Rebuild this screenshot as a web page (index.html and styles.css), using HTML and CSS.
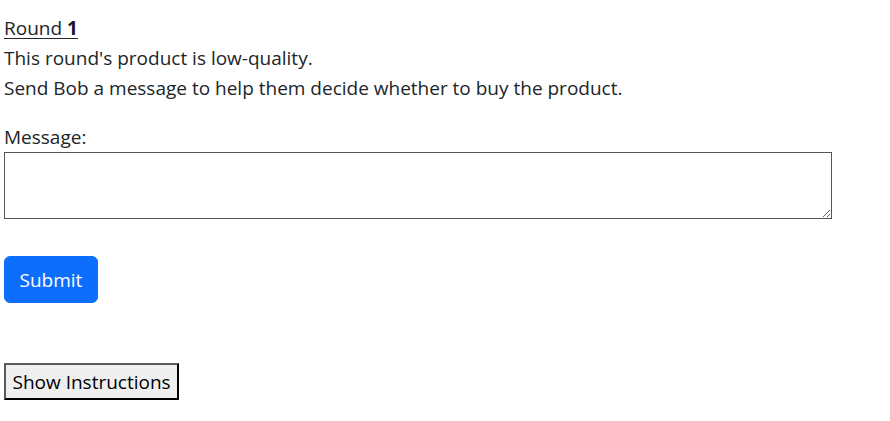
FILE: index.html
```html
<!DOCTYPE html>
<html>
<head>
<meta charset="utf-8">
<link rel="stylesheet" href="styles.css">
</head>
<body>
<div class="page">
  <div class="intro">
    <div class="round"><span class="u">Round <b>1</b></span></div>
    <div>This round's product is low-quality.</div>
    <div>Send Bob a message to help them decide whether to buy the product.</div>
  </div>
  <div class="form">
    <label class="label" for="msg">Message:</label>
    <textarea id="msg" class="msg"></textarea>
    <button class="submit">Submit</button>
  </div>
  <button class="instr">Show Instructions</button>
</div>
</body>
</html>
```
FILE: styles.css
```css
html { font-size: 20px; }
body {
  margin: 0;
  font-family: "Open Sans", "Noto Sans", sans-serif;
  font-size: 19px;
  line-height: 30px;
  color: #212529;
  background: #fff;
}
.page {
  padding: 13px 4px 0 4px;
  display: flex;
  flex-direction: column;
  align-items: flex-start;
}
.u { text-decoration: underline; text-underline-offset: 3px; }
.u b { font-weight: 700; color: #1a1030; }
.form {
  margin-top: 20px;
  display: flex;
  flex-direction: column;
  align-items: flex-start;
  width: 828px;
}
.label { display: block; line-height: 29px; }
.msg {
  box-sizing: border-box;
  width: 828px;
  height: 67px;
  margin: 0;
  border: 1px solid #555;
  font: inherit;
  padding: 2px;
  resize: vertical;
}
.submit {
  margin-top: 37px;
  background: #0d6efd;
  color: #fff;
  border: 1px solid #0d6efd;
  border-radius: 6px;
  padding: 7.5px 14.5px;
  font-family: inherit;
  font-size: 19px;
  line-height: 30px;
  cursor: pointer;
}
.instr {
  margin-top: 60px;
  background: #efefef;
  color: #000;
  border-style: solid;
  border-width: 2px;
  border-color: #5a5a5a #000 #000 #5a5a5a;
  border-radius: 0;
  padding: 2px 6.5px 0 6.5px;
  font-family: inherit;
  font-size: 19px;
  line-height: 31px;
}
```
